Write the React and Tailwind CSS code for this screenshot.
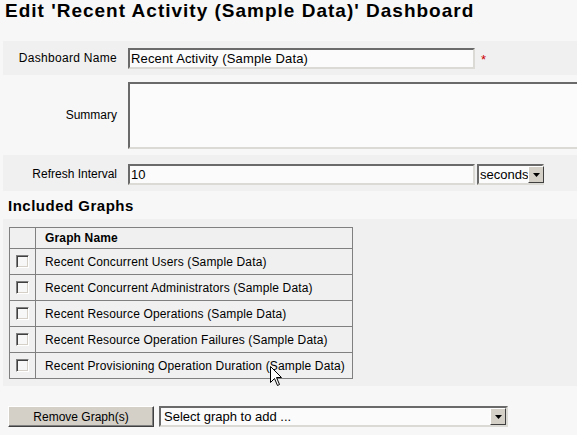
import React from "react";

function DropBtn() {
  return (
    <div className="w-[16px] h-[17px] shrink-0 bg-[#d4d0c8] border border-t-white border-l-white border-b-[#404040] border-r-[#404040] flex items-center justify-center">
      <svg width="7" height="4" viewBox="0 0 7 4"><path d="M0 0h7L3.5 4z" fill="#000" /></svg>
    </div>
  );
}

function Checkbox() {
  return (
    <div className="w-[13px] h-[13px] bg-[#f7f7f7] border border-t-[#808080] border-l-[#808080] border-b-white border-r-white shadow-[inset_1px_1px_0_#404040,inset_-1px_-1px_0_#d4d0c8]" />
  );
}

const rows = [
  "Recent Concurrent Users (Sample Data)",
  "Recent Concurrent Administrators (Sample Data)",
  "Recent Resource Operations (Sample Data)",
  "Recent Resource Operation Failures (Sample Data)",
  "Recent Provisioning Operation Duration (Sample Data)",
];

const inset =
  "border-2 border-t-[#6a6a6a] border-l-[#6a6a6a] border-b-[#dcdad4] border-r-[#dcdad4]";

export default function App() {
  return (
    <div className="relative w-[577px] h-[435px] overflow-hidden bg-[#f7f7f7] text-black font-['Liberation_Sans',Arial,sans-serif]">
      <h1 className="h-[41px] pl-[5px] text-[19px] tracking-[1px] font-bold leading-[22px] whitespace-nowrap">
        Edit 'Recent Activity (Sample Data)' Dashboard
      </h1>

      <div className="ml-[3px] h-[34px] bg-[#f0f0f0] flex items-start pt-[7px]">
        <div className="w-[114px] shrink-0 text-right text-[12px] tracking-[0.3px] leading-[21px]">Dashboard Name</div>
        <div className={`ml-[11px] w-[347px] shrink-0 h-[21px] bg-[#fbfbfb] ${inset} flex items-center pl-[1px] text-[13px] tracking-[0.15px] whitespace-nowrap`}>
          Recent Activity (Sample Data)
        </div>
        <span className="ml-[6px] mt-[3px] text-[13px] leading-[18px] text-[#cc0000]">*</span>
      </div>

      <div className="ml-[3px] h-[80px] flex items-center">
        <div className="w-[114px] shrink-0 text-right text-[12px]">Summary</div>
        <div className={`ml-[11px] w-[500px] h-[67px] shrink-0 bg-[#fbfbfb] ${inset}`} />
      </div>

      <div className="ml-[3px] h-[36px] bg-[#f0f0f0] flex items-start pt-[9px]">
        <div className="w-[114px] shrink-0 text-right text-[12px] leading-[21px]">Refresh Interval</div>
        <div className={`ml-[11px] w-[347px] shrink-0 h-[21px] bg-[#fbfbfb] ${inset} flex items-center pl-[1px] text-[13px]`}>
          10
        </div>
        <div className={`ml-[2px] w-[67px] shrink-0 h-[21px] bg-[#fbfbfb] ${inset} flex items-center justify-between pl-[1px] text-[13px]`}>
          <span>seconds</span>
          <DropBtn />
        </div>
      </div>

      <h2 className="mt-[6px] pl-[8px] text-[15px] tracking-[0.5px] font-bold leading-[18px]">Included Graphs</h2>

      <div className="ml-[3px] mt-[4px] bg-[#f0f0f0] pt-[8px] pl-[6px] pb-[7px]">
        <div className="w-[344px] border-t border-l border-r border-[#808080] text-[12px] tracking-[0.15px]">
          <div className="flex h-[21px] border-b border-[#808080]">
            <div className="w-[26px] border-r border-[#808080]" />
            <div className="pl-[9px] font-bold flex items-center">Graph Name</div>
          </div>
          {rows.map((r) => (
            <div key={r} className="flex h-[26px] border-b border-[#808080]">
              <div className="w-[26px] border-r border-[#808080] flex items-center pl-[6px]">
                <Checkbox />
              </div>
              <div className="pl-[9px] flex items-center whitespace-nowrap">{r}</div>
            </div>
          ))}
        </div>
      </div>

      <div className="mt-[20px] pl-[8px] flex items-center gap-[5px]">
        <button className="w-[146px] h-[21px] bg-[#d4d0c8] text-[12px] border border-t-white border-l-white border-b-[#404040] border-r-[#404040] shadow-[inset_-1px_-1px_0_#808080]">
          Remove Graph(s)
        </button>
        <div className={`w-[349px] h-[21px] bg-[#fbfbfb] ${inset} flex items-center justify-between pl-[3px] text-[13px]`}>
          <span>Select graph to add ...</span>
          <DropBtn />
        </div>
      </div>

      <svg className="absolute left-[270px] top-[366px]" width="13" height="21" viewBox="0 0 13 21">
        <path d="M0.5 0.5V16.5L4.5 12.5L7.5 19.5L9.5 18.5L6.5 11.5H11.5Z" fill="#fff" stroke="#000" strokeWidth="1" />
      </svg>
    </div>
  );
}
